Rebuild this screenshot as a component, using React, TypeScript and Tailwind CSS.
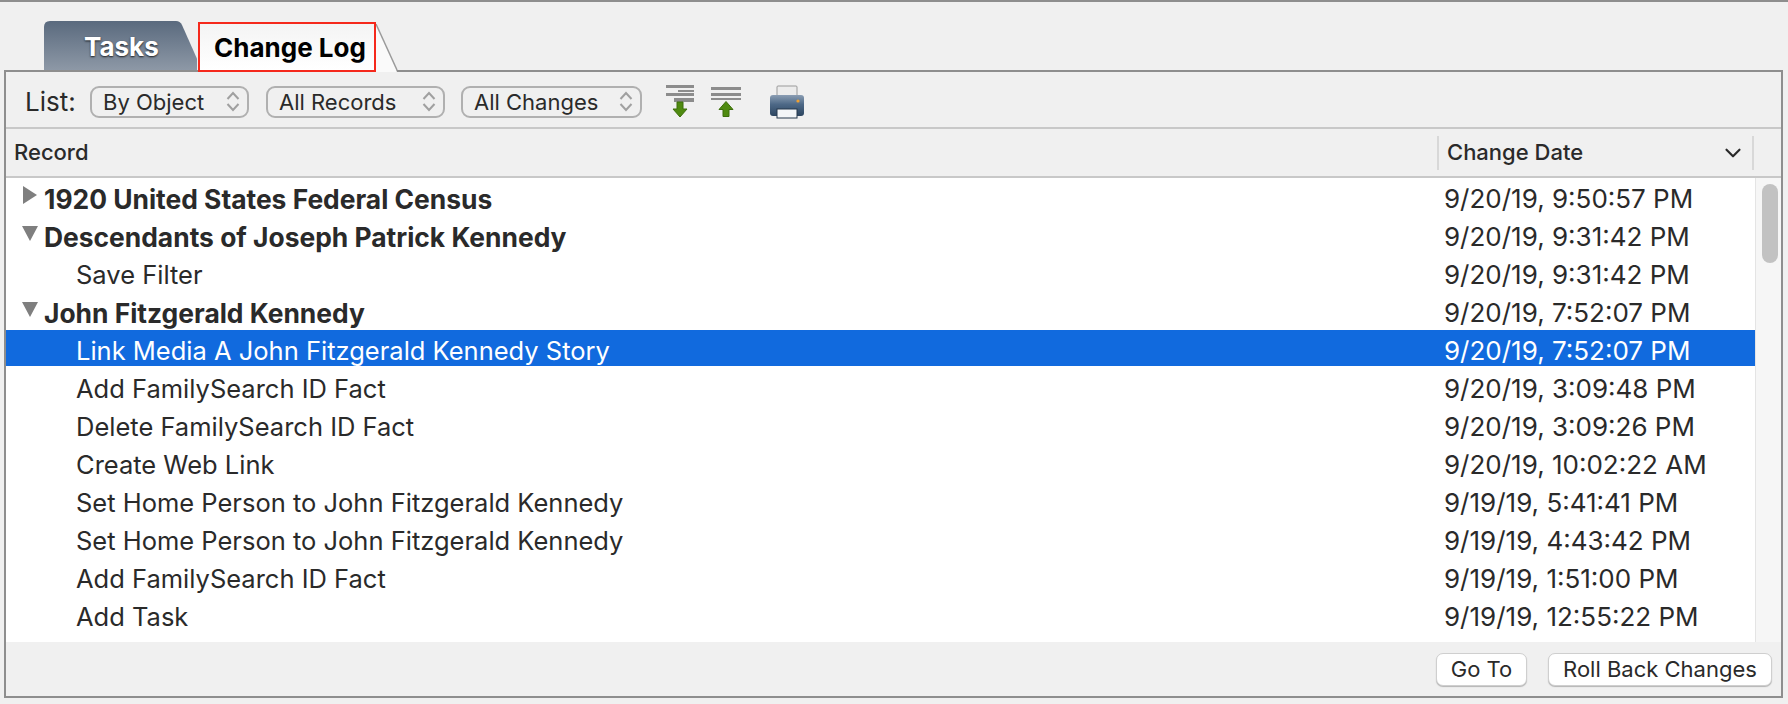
import { ChevronDown } from "lucide-react";

const ROWS = [
  { label: "1920 United States Federal Census", date: "9/20/19, 9:50:57 PM", kind: "closed" },
  { label: "Descendants of Joseph Patrick Kennedy", date: "9/20/19, 9:31:42 PM", kind: "open" },
  { label: "Save Filter", date: "9/20/19, 9:31:42 PM", kind: "child" },
  { label: "John Fitzgerald Kennedy", date: "9/20/19, 7:52:07 PM", kind: "open" },
  { label: "Link Media A John Fitzgerald Kennedy Story", date: "9/20/19, 7:52:07 PM", kind: "selected" },
  { label: "Add FamilySearch ID Fact", date: "9/20/19, 3:09:48 PM", kind: "child" },
  { label: "Delete FamilySearch ID Fact", date: "9/20/19, 3:09:26 PM", kind: "child" },
  { label: "Create Web Link", date: "9/20/19, 10:02:22 AM", kind: "child" },
  { label: "Set Home Person to John Fitzgerald Kennedy", date: "9/19/19, 5:41:41 PM", kind: "child" },
  { label: "Set Home Person to John Fitzgerald Kennedy", date: "9/19/19, 4:43:42 PM", kind: "child" },
  { label: "Add FamilySearch ID Fact", date: "9/19/19, 1:51:00 PM", kind: "child" },
  { label: "Add Task", date: "9/19/19, 12:55:22 PM", kind: "child" },
];

function Select({ label, width }: { label: string; width: string }) {
  return (
    <div className={`${width} h-[32px] flex items-center justify-between pl-[11px] pr-[7px] rounded-[9px] border-2 border-[#b0b0b0] text-[22px] leading-none text-[#2a2a2a]`}>
      <span>{label}</span>
      <svg width="14" height="21" viewBox="0 0 14 21" fill="none" stroke="#a0a0a0" strokeWidth="2">
        <path d="M1.500 8L7 2l5.500 6M1.500 13L7 19l5.500-6" />
      </svg>
    </div>
  );
}

function LinesDown() {
  return (
    <svg width="30" height="34" viewBox="0 0 30 34">
      <g fill="#8c8c8c">
        <rect x="1" y="0" width="28" height="3" />
        <rect x="13" y="5" width="16" height="2" />
        <rect x="1" y="8" width="28" height="3" />
        <rect x="9" y="13" width="20" height="1" />
        <rect x="9" y="14" width="20" height="3" />
      </g>
      <path d="M12 17h6v7h4l-7 8-7-8h4z" fill="#4f8a10" stroke="#3c6e0a" strokeWidth="1" />
    </svg>
  );
}

function LinesUp() {
  return (
    <svg width="30" height="30" viewBox="0 0 30 30">
      <g fill="#8c8c8c">
        <rect x="0" y="0" width="30" height="3" />
        <rect x="0" y="6" width="30" height="3" />
        <rect x="0" y="11" width="30" height="2" />
      </g>
      <path d="M15 14.500l7 8h-4v7h-6v-7H8z" fill="#4f8a10" stroke="#3c6e0a" strokeWidth="1" />
    </svg>
  );
}

function Printer() {
  return (
    <svg width="34" height="34" viewBox="0 0 34 34">
      <defs>
        <linearGradient id="printerBody" x1="0" y1="0" x2="0" y2="1">
          <stop offset="0" stopColor="#8a9db3" />
          <stop offset="0.45" stopColor="#4d6886" />
          <stop offset="1" stopColor="#2c4560" />
        </linearGradient>
      </defs>
      <rect x="7" y="1" width="20" height="12" rx="1" fill="#ececec" stroke="#9a9a9a" />
      <path d="M3 10h28a3 3 0 0 1 3 3v15a3 3 0 0 1-3 3H3a3 3 0 0 1-3-3V13a3 3 0 0 1 3-3z" fill="url(#printerBody)" />
      <circle cx="28" cy="16" r="1.600" fill="#f0a030" />
      <rect x="7" y="24" width="20" height="9" fill="#f4f6f8" stroke="#26384c" />
    </svg>
  );
}

function Triangle({ open }: { open: boolean }) {
  return open ? (
    <svg width="16" height="15" viewBox="0 0 16 15" className="mt-[-8px]">
      <path d="M0 0h16l-8 15z" fill="#7f7f7f" />
    </svg>
  ) : (
    <svg width="14" height="18" viewBox="0 0 14 18" className="mt-[-8px] ml-[1px]">
      <path d="M0 0l14 9-14 9z" fill="#7f7f7f" />
    </svg>
  );
}

function Row({ label, date, kind }: { label: string; date: string; kind: string }) {
  const selected = kind === "selected";
  const parent = kind === "open" || kind === "closed";
  return (
    <div className={`h-[38px] flex items-center text-[25.500px] leading-none ${selected ? "text-white" : "text-[#2a2a2a]"}`}>
      <div className={`absolute left-0 right-0 h-[36px] mt-[-6px] ${selected ? "bg-[#116ade]" : ""}`} />
      <div className={`relative w-[1438px] flex items-center ${parent ? "font-bold pl-[16px]" : "pl-[70px]"}`}>
        {parent && (
          <span className="w-[22px] flex justify-start">
            <Triangle open={kind === "open"} />
          </span>
        )}
        <span className={parent ? "text-[26.400px]" : ""}>{label}</span>
      </div>
      <span className="relative text-[26px]">{date}</span>
    </div>
  );
}

export default function App() {
  return (
    <div className="w-[1788px] h-[704px] bg-[#f0f0f0] border-t-2 border-[#8e8e8e] overflow-hidden font-['Inter',sans-serif]">
      <div className="h-[68px] pt-[18px] pl-[44px] flex items-end">
        <div className="relative w-[153px] h-[50px] flex items-center pl-[40px] pt-[2px]">
          <svg className="absolute inset-0" width="153" height="50" viewBox="0 0 153 50">
            <defs>
              <linearGradient id="tasksFill" x1="0" y1="0" x2="0" y2="1">
                <stop offset="0" stopColor="#5a6a7e" />
                <stop offset="1" stopColor="#8d98a6" />
              </linearGradient>
            </defs>
            <path d="M0 50V7q0-6 6-6h126q4 0 6 4l20 45z" fill="url(#tasksFill)" />
          </svg>
          <span className="relative text-[26px] font-bold text-white [text-shadow:0_1px_2px_rgba(0,0,0,0.8)]">Tasks</span>
        </div>
        <div className="relative z-10 ml-[1px] w-[178px] h-[50px] mb-[-2px] border-2 border-[#f5291c] bg-gradient-to-b from-[#f4f4f4] to-white flex items-center pl-[14px]">
          <span className="text-[26px] font-bold text-black">Change Log</span>
          <svg className="absolute left-[176px] top-[-2px]" width="22" height="50" viewBox="0 0 22 50" fill="none">
            <path d="M0 0v50h21z" fill="#fafafa" />
            <path d="M0 2l21 46" stroke="#9a9a9a" strokeWidth="1.500" />
          </svg>
        </div>
      </div>
      <div className="ml-[4px] w-[1779px] h-[628px] border-2 border-[#8e8e8e] flex flex-col">
        <div className="h-[57px] shrink-0 flex items-center pl-[19px] pt-[4px] border-b-2 border-[#c8c8c8]">
          <span className="w-[65px] text-[26px] leading-none text-[#2a2a2a]">List:</span>
          <Select label="By Object" width="w-[159px]" />
          <div className="w-[17px]" />
          <Select label="All Records" width="w-[179px]" />
          <div className="w-[16px]" />
          <Select label="All Changes" width="w-[181px]" />
          <div className="ml-[23px] mt-[1px]"><LinesDown /></div>
          <div className="ml-[16px]"><LinesUp /></div>
          <div className="ml-[29px]"><Printer /></div>
        </div>
        <div className="h-[49px] shrink-0 flex items-center border-b-2 border-[#c8c8c8] text-[22px] font-medium text-[#2a2a2a]">
          <span className="w-[1431px] pl-[8px]">Record</span>
          <div className="w-[317px] h-[34px] flex items-center justify-between pl-[8px] pr-[6px] border-l-2 border-r-2 border-[#d8d8d8]">
            <span>Change Date</span>
            <ChevronDown size={26} strokeWidth={2} />
          </div>
        </div>
        <div className="flex h-[464px] shrink-0 overflow-hidden">
          <div className="relative w-[1749px] bg-white pt-[2px]">
            {ROWS.map((r, i) => (
              <Row key={i} {...r} />
            ))}
          </div>
          <div className="flex-1 bg-[#f6f6f6] border-l border-[#e4e4e4] pl-[6px] pt-[6px]">
            <div className="w-[16px] h-[79px] rounded-full bg-[#c2c2c2]" />
          </div>
        </div>
        <div className="flex-1 flex items-center justify-end gap-[21px] pr-[9px] text-[22px] leading-none text-[#2a2a2a]">
          <button className="w-[91px] h-[33px] rounded-[7px] bg-white border border-[#cfcfcf] shadow-[0_1px_1px_rgba(0,0,0,0.25)]">Go To</button>
          <button className="w-[224px] h-[33px] rounded-[7px] bg-white border border-[#cfcfcf] shadow-[0_1px_1px_rgba(0,0,0,0.25)]">Roll Back Changes</button>
        </div>
      </div>
    </div>
  );
}
